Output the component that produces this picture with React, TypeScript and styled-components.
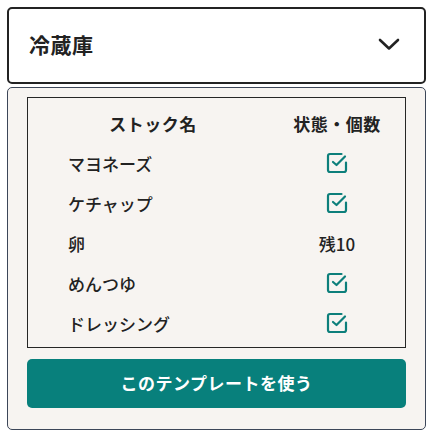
import React from "react";
import styled, { createGlobalStyle } from "styled-components";

const Global = createGlobalStyle`
  html, body { margin: 0; padding: 0; background: #ffffff; }
  body { font-family: "Noto Sans CJK JP", "Noto Sans", sans-serif; color: #222; }
`;

const Page = styled.div`
  width: 432px;
  padding: 7px 6px 0 7px;
  box-sizing: border-box;
  display: flex;
  flex-direction: column;
  gap: 3px;
`;

const Select = styled.div`
  height: 77px;
  box-sizing: border-box;
  border: 2px solid #232323;
  border-radius: 5px;
  background: #fff;
  display: flex;
  align-items: center;
  justify-content: space-between;
  padding: 0 24px 4px 20px;
`;

const SelectLabel = styled.span`
  font-size: 21px;
  font-weight: 700;
  letter-spacing: 0.5px;
  color: #222;
`;

const Panel = styled.div`
  border: 1px solid #3c4658;
  border-radius: 5px;
  background: #f7f4f1;
  padding: 9px 19px 21px 19px;
  display: flex;
  flex-direction: column;
  gap: 11px;
`;

const Table = styled.div`
  border: 1px solid #262626;
  display: grid;
  grid-template-columns: 250px 1fr;
  grid-auto-rows: 40px;
  padding: 5px 0 4px;
`;

const HeadCell = styled.div<{ $pr?: number }>`
  display: flex;
  align-items: center;
  justify-content: center;
  font-size: 17px;
  font-weight: 700;
  padding-right: ${(p) => p.$pr ?? 0}px;
  letter-spacing: 0.5px;
`;

const NameCell = styled.div`
  display: flex;
  align-items: center;
  padding-left: 40px;
  font-size: 17px;
  font-weight: 500;
`;

const StatusCell = styled.div`
  display: flex;
  align-items: center;
  justify-content: center;
  padding-right: 9px;
  font-size: 17px;
  font-weight: 500;
`;

const UseButton = styled.button`
  height: 49px;
  border: none;
  border-radius: 5px;
  background: #08807c;
  color: #fff;
  font-family: "Noto Sans CJK JP", "Noto Sans", sans-serif;
  font-size: 17px;
  font-weight: 700;
  letter-spacing: 0.5px;
  cursor: pointer;
  padding: 0 0 2px;
`;

const Chevron = () => (
  <svg width="22" height="14" viewBox="0 0 22 14" fill="none">
    <polyline
      points="2,3 11,11.5 20,3"
      stroke="#222"
      strokeWidth="2.6"
      strokeLinecap="round"
      strokeLinejoin="round"
    />
  </svg>
);

const CheckIcon = () => (
  <svg width="24" height="24" viewBox="0 0 24 24" fill="none">
    <path
      d="M21 11.5V19a2 2 0 0 1-2 2H5a2 2 0 0 1-2-2V5a2 2 0 0 1 2-2h11.5"
      stroke="#0d7f7b"
      strokeWidth="2.2"
      strokeLinecap="round"
      strokeLinejoin="round"
    />
    <path
      d="M8 11l3.5 3L20 5.5"
      stroke="#0d7f7b"
      strokeWidth="2.2"
      strokeLinecap="round"
      strokeLinejoin="round"
    />
  </svg>
);

type Row = { name: string; status: "check" | string };

const rows: Row[] = [
  { name: "マヨネーズ", status: "check" },
  { name: "ケチャップ", status: "check" },
  { name: "卵", status: "残10" },
  { name: "めんつゆ", status: "check" },
  { name: "ドレッシング", status: "check" },
];

export default function App() {
  return (
    <>
      <Global />
      <Page>
        <Select>
          <SelectLabel>冷蔵庫</SelectLabel>
          <Chevron />
        </Select>
        <Panel>
          <Table>
            <HeadCell>ストック名</HeadCell>
            <HeadCell $pr={9}>状態・個数</HeadCell>
            {rows.map((r) => (
              <React.Fragment key={r.name}>
                <NameCell>{r.name}</NameCell>
                <StatusCell>{r.status === "check" ? <CheckIcon /> : r.status}</StatusCell>
              </React.Fragment>
            ))}
          </Table>
          <UseButton>このテンプレートを使う</UseButton>
        </Panel>
      </Page>
    </>
  );
}
